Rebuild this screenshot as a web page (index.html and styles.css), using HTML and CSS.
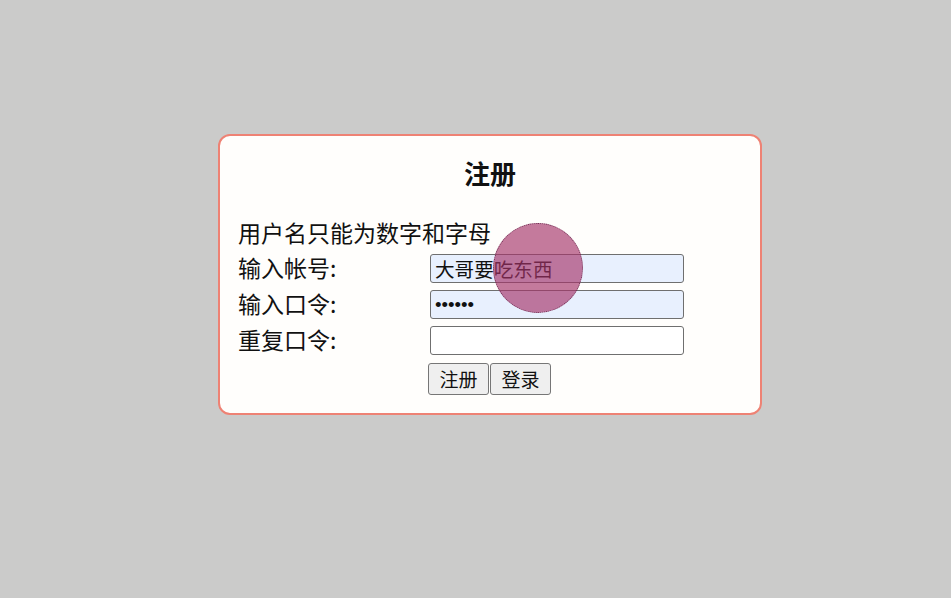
FILE: index.html
```html
<!DOCTYPE html>
<html lang="zh-CN">
<head>
<meta charset="utf-8">
<title>注册</title>
<link rel="stylesheet" href="styles.css">
</head>
<body>
<div class="card">
  <h3 class="title">注册</h3>
  <p class="hint">用户名只能为数字和字母</p>
  <form class="form">
    <label class="label" for="acc">输入帐号:</label>
    <div class="field"><input id="acc" class="input filled" type="text" value="大哥要吃东西"></div>
    <label class="label" for="pwd">输入口令:</label>
    <div class="field"><input id="pwd" class="input filled pass" type="password" value="123456"></div>
    <label class="label" for="pwd2">重复口令:</label>
    <div class="field"><input id="pwd2" class="input pass" type="password"></div>
    <div class="spacer"></div>
    <div class="buttons">
      <button type="button" class="btn">注册</button>
      <button type="button" class="btn">登录</button>
    </div>
  </form>
  <div class="click-marker"></div>
</div>
</body>
</html>
```

FILE: styles.css
```css
html, body {
  margin: 0;
  padding: 0;
  background: #cbcbca;
  height: 100%;
}
body {
  font-family: "Noto Sans CJK SC", "Noto Sans", "Liberation Sans", sans-serif;
  color: #111;
  padding-top: 134px;
  box-sizing: border-box;
}
.card {
  position: relative;
  margin-left: 218px;
  width: 544px;
  height: 281px;
  box-sizing: border-box;
  border: 2px solid #ee8274;
  border-radius: 12px;
  background: #fffefc;
  padding: 0 0 0 18px;
}
.title {
  margin: 0;
  padding-top: 21px;
  font-size: 26px;
  line-height: 31px;
  font-weight: 700;
  text-align: center;
  padding-right: 18px;
}
.hint {
  margin: 31px 0 0 0;
  font-size: 23px;
  line-height: 27px;
}
.form {
  display: grid;
  grid-template-columns: 192px 254px;
  grid-template-rows: 36px 36px 36px 40px;
  margin-top: 3px;
  align-items: center;
}
.label {
  font-size: 23px;
  line-height: 27px;
}
.field {
  display: flex;
  align-items: center;
  margin-top: 3px;
}
.input {
  width: 254px;
  height: 29px;
  box-sizing: border-box;
  border: 1.4px solid #6f6f6f;
  border-radius: 3px;
  background: #fff;
  font-family: "Noto Sans CJK SC", "Noto Sans", sans-serif;
  font-size: 19.6px;
  padding: 0 4px;
  color: #111;
  outline: none;
}
.input.pass {
  font-family: "Liberation Sans", Arial, sans-serif;
  font-size: 18.6px;
}
.input.filled {
  background: #e8f0fe;
}
.buttons {
  display: flex;
  gap: 1px;
  margin-left: -2px;
  margin-top: 3px;
}
.btn {
  height: 32px;
  width: 61px;
  box-sizing: border-box;
  border: 1.4px solid #767676;
  border-radius: 3px;
  background: #efefef;
  font-family: "Noto Sans CJK SC", "Noto Sans", sans-serif;
  font-size: 19px;
  line-height: 1;
  padding: 0;
  color: #111;
}
.click-marker {
  position: absolute;
  left: 273px;
  top: 87px;
  width: 90px;
  height: 90px;
  box-sizing: border-box;
  border-radius: 50%;
  background: rgba(165, 50, 105, 0.65);
  border: 1px dotted #6e2f52;
  pointer-events: none;
}
```
